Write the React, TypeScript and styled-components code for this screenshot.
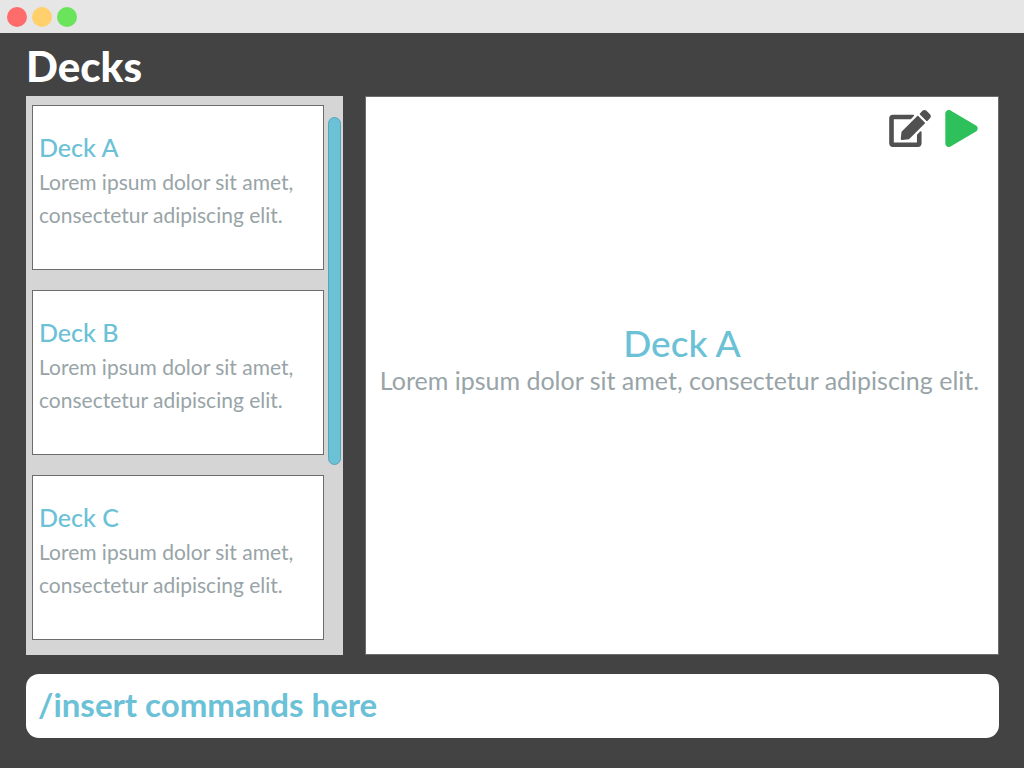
import React, { useState } from "react";
import styled, { createGlobalStyle } from "styled-components";
import { FaEdit, FaPlay } from "react-icons/fa";

const GlobalStyle = createGlobalStyle`
  *, *::before, *::after {
    box-sizing: border-box;
  }
  body {
    margin: 0;
    background: #434343;
    font-family: Lato, "Open Sans", sans-serif;
  }
  h1, h2, p {
    margin: 0;
  }
`;

const Window = styled.div`
  display: flex;
  flex-direction: column;
  min-height: 100vh;
`;

const TitleBar = styled.header`
  display: flex;
  align-items: center;
  gap: 5px;
  height: 33px;
  padding: 0 7px;
  background: #e6e6e6;
`;

const WindowButton = styled.button<{ $color: string }>`
  width: 20px;
  height: 20px;
  padding: 0;
  border: 0;
  border-radius: 50%;
  background: ${(p) => p.$color};
`;

const Content = styled.main`
  display: flex;
  flex: 1;
  flex-direction: column;
  padding: 0 25px 30px 26px;
`;

const PageTitle = styled.h1`
  padding: 5px 0 2px;
  color: #fff;
  font-size: 42px;
  font-weight: 900;
  line-height: 56px;
`;

const Panels = styled.div`
  display: flex;
  flex: 1;
  gap: 22px;
`;

const Sidebar = styled.aside`
  display: flex;
  flex: 0 0 317px;
  gap: 4px;
  padding: 9px 2px 15px 6px;
  background: #d5d5d5;
`;

const DeckList = styled.div`
  display: flex;
  flex: 1;
  flex-direction: column;
  gap: 20px;
`;

const DeckCard = styled.article`
  flex: 1;
  padding: 25px 6px;
  border: 1px solid #6c6c6c;
  background: #fff;
`;

const CardTitle = styled.h2`
  padding-bottom: 1px;
  color: #6bc1d6;
  font-size: 25px;
  font-weight: 500;
  line-height: 33px;
`;

const CardText = styled.p`
  color: #98a4a7;
  font-size: 21px;
  font-weight: 400;
  line-height: 33px;
`;

const ScrollTrack = styled.div`
  width: 13px;
  padding-top: 12px;
`;

const ScrollThumb = styled.div`
  height: 348px;
  border: 1px solid #59a4b6;
  border-radius: 7px;
  background: #6bc1d6;
`;

const Detail = styled.section`
  display: flex;
  flex: 1;
  flex-direction: column;
  min-width: 0;
  border: 1px solid #6c6c6c;
  background: #fff;
`;

const Toolbar = styled.div`
  display: flex;
  justify-content: flex-end;
  gap: 14px;
  padding: 13px 20px 0;
`;

const IconButton = styled.button<{ $color: string; $width: number }>`
  display: flex;
  padding: 0;
  border: 0;
  background: none;
  color: ${(p) => p.$color};

  svg {
    width: ${(p) => p.$width}px;
    height: 37px;
  }
`;

const DetailBody = styled.div`
  display: flex;
  flex: 1;
  flex-direction: column;
  align-items: center;
  justify-content: center;
  padding-bottom: 82px;
  text-align: center;
`;

const DetailTitle = styled.h2`
  color: #6bc1d6;
  font-size: 37px;
  font-weight: 500;
  line-height: 42px;
`;

const DetailText = styled.p`
  padding-right: 5px;
  color: #98a4a7;
  font-size: 25px;
  font-weight: 400;
  line-height: 33px;
`;

const CommandInput = styled.input`
  width: 100%;
  height: 64px;
  margin-top: 19px;
  padding: 0 12px 4px;
  border: 0;
  border-radius: 13px;
  background: #fff;
  color: #6bc1d6;
  font-family: inherit;
  font-size: 33px;
  font-weight: 700;

  &::placeholder {
    color: #6bc1d6;
    opacity: 1;
  }
`;

const description = "Lorem ipsum dolor sit amet, consectetur adipiscing elit.";
const decks = ["Deck A", "Deck B", "Deck C"].map((name) => ({ name, description }));

export default function App() {
  const [command, setCommand] = useState("");
  const selected = decks[0];

  return (
    <Window>
      <GlobalStyle />
      <TitleBar>
        <WindowButton $color="#ff6c6c" aria-label="Close" />
        <WindowButton $color="#ffd06c" aria-label="Minimize" />
        <WindowButton $color="#6ae45a" aria-label="Maximize" />
      </TitleBar>
      <Content>
        <PageTitle>Decks</PageTitle>
        <Panels>
          <Sidebar>
            <DeckList>
              {decks.map((deck) => (
                <DeckCard key={deck.name}>
                  <CardTitle>{deck.name}</CardTitle>
                  <CardText>{deck.description}</CardText>
                </DeckCard>
              ))}
            </DeckList>
            <ScrollTrack>
              <ScrollThumb />
            </ScrollTrack>
          </Sidebar>
          <Detail>
            <Toolbar>
              <IconButton $color="#515151" $width={42} aria-label="Edit deck">
                <FaEdit />
              </IconButton>
              <IconButton $color="#2dc05b" $width={33} aria-label="Play deck">
                <FaPlay />
              </IconButton>
            </Toolbar>
            <DetailBody>
              <DetailTitle>{selected.name}</DetailTitle>
              <DetailText>{selected.description}</DetailText>
            </DetailBody>
          </Detail>
        </Panels>
        <CommandInput
          aria-label="Command"
          placeholder="/insert commands here"
          value={command}
          onChange={(e) => setCommand(e.target.value)}
        />
      </Content>
    </Window>
  );
}
